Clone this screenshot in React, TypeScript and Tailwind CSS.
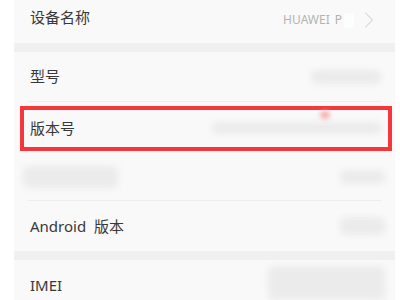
import { ChevronRight } from "lucide-react";

function Blur({ className }: { className: string }) {
  return <div className={`rounded-md bg-[#ebebeb] blur-[3px] ${className}`} />;
}

function Divider() {
  return <div className="mx-[14px] h-px bg-[#ededed]" />;
}

export default function App() {
  const font = { fontFamily: '"Noto Sans", "Noto Sans CJK SC", sans-serif' };

  return (
    <div className="flex h-[300px] w-[400px] overflow-hidden bg-white" style={font}>
      <div className="ml-[14px] mr-[5px] flex flex-1 flex-col bg-[#f9f9f9] text-[15px] text-[#383838]">
        {/* 设备名称 */}
        <div className="flex h-[43px] items-start justify-between pl-[16px] pr-[12px] pt-[6px]">
          <span>设备名称</span>
          <div className="flex items-center text-[12px] text-[#b3b3b3]">
            <span>HUAWEI</span>
            <span className="ml-[5px]">P</span>
            <span className="ml-[2px] h-[15px] w-[10px] bg-[#fdfdfd]" />
            <ChevronRight className="ml-[1px] h-[28px] w-[28px] text-[#c4c4c4]" strokeWidth={0.8} />
          </div>
        </div>
        <div className="h-[9px] bg-[#f0f0f0]" />

        {/* 型号 */}
        <div className="flex h-[49px] items-center justify-between pl-[16px] pr-[14px]">
          <span>型号</span>
          <Blur className="h-[14px] w-[70px]" />
        </div>
        <Divider />

        {/* 版本号 */}
        <div className="flex h-[52px] items-center">
          <div className="relative ml-[6px] mr-[3px] flex h-[45px] flex-1 items-center justify-between border-4 border-[#f5363a] pl-[6px] pr-[6px]">
            <span>版本号</span>
            <Blur className="h-[12px] w-[170px]" />
            <div className="absolute right-[58px] top-[1px] h-[8px] w-[10px] rounded-full bg-[#f8b4b4] blur-[2px]" />
          </div>
        </div>

        <div className="flex h-[46px] items-center justify-between pl-[9px] pr-[10px]">
          <Blur className="h-[22px] w-[95px]" />
          <Blur className="h-[14px] w-[45px]" />
        </div>
        <Divider />

        {/* Android 版本 */}
        <div className="flex h-[50px] items-center justify-between pl-[16px] pr-[10px]">
          <span>
            Android <span className="ml-[4px]">版本</span>
          </span>
          <Blur className="h-[18px] w-[45px]" />
        </div>
        <div className="h-[9px] bg-[#f0f0f0]" />

        {/* IMEI */}
        <div className="flex h-[40px] items-end justify-between pl-[16px] pr-[10px]">
          <span className="pb-[4px]">IMEI</span>
          <Blur className="h-[34px] w-[117px]" />
        </div>
      </div>
    </div>
  );
}
